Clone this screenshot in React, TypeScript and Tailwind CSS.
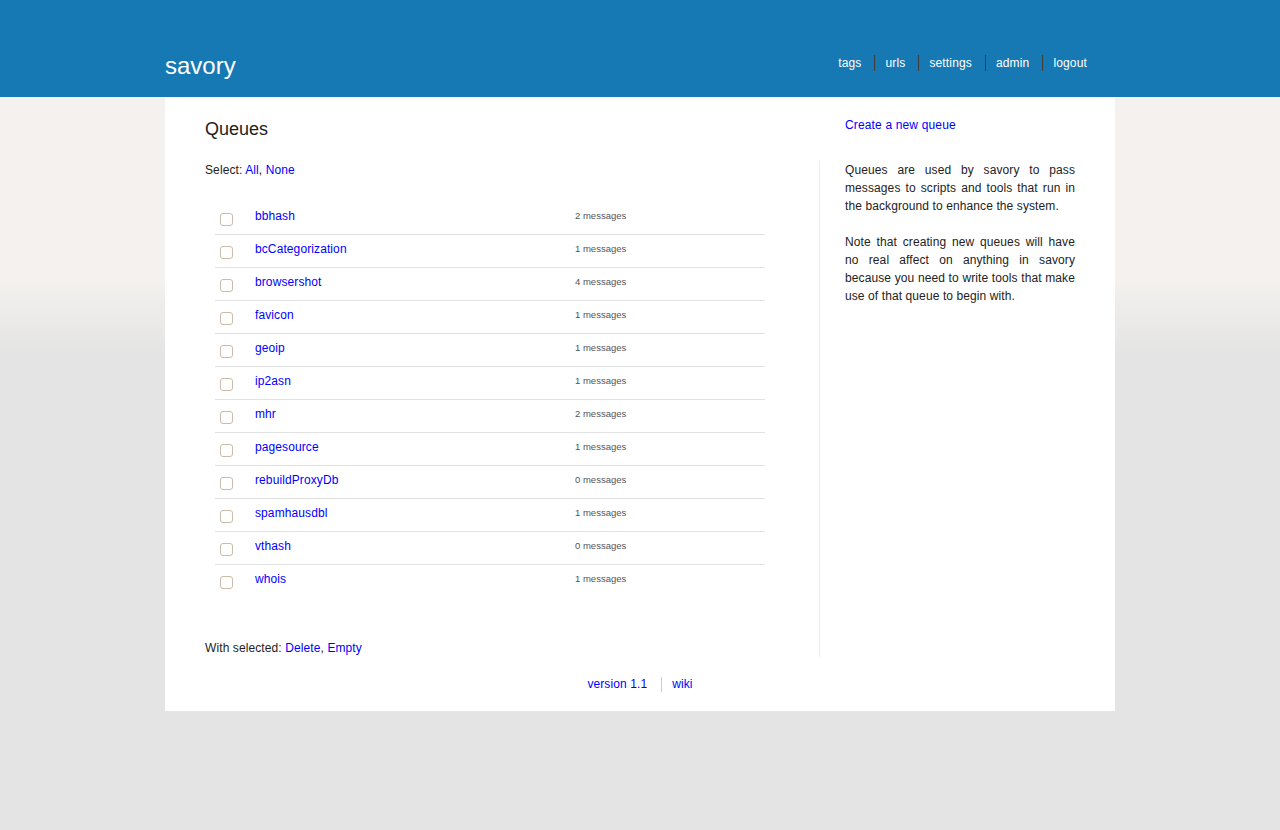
import React from "react";

const queues: [string, number][] = [
  ["bbhash", 2],
  ["bcCategorization", 1],
  ["browsershot", 4],
  ["favicon", 1],
  ["geoip", 1],
  ["ip2asn", 1],
  ["mhr", 2],
  ["pagesource", 1],
  ["rebuildProxyDb", 0],
  ["spamhausdbl", 1],
  ["vthash", 0],
  ["whois", 1],
];

const navItems = ["tags", "urls", "settings", "admin", "logout"];

export default function App() {
  return (
    <div
      className="min-h-screen w-full bg-[linear-gradient(to_bottom,#f4f1ee_0px,#f4f1ee_277px,#e4e4e4_357px,#e4e4e4_100%)] text-[#222] text-[12px] tracking-[0.1px]"
      style={{ fontFamily: '"Liberation Sans", Arial, sans-serif' }}
    >
      <header className="h-[97px] bg-[#1779b3]">
        <div className="mx-auto flex w-[950px] items-start justify-between">
          <div className="pt-[52px] text-[24px] leading-[28px] tracking-normal text-white">savory</div>
          <nav className="mt-[55px] flex items-start pr-[15px] text-[12px] leading-[15px] tracking-[0.15px] text-white">
            {navItems.map((n, i) => (
              <a
                key={n}
                href="#"
                className={
                  i === 0
                    ? "pl-[12px] pr-[13px] pt-[1px]"
                    : "border-l border-[#3c3c3c] pl-[10px] pr-[13px] pt-[1px]"
                }
              >
                {n}
              </a>
            ))}
          </nav>
        </div>
      </header>

      <main className="mx-auto w-[950px] bg-white">
        <div className="flex">
          <section className="w-[654px] shrink-0 pl-[40px] pt-[22px] pb-[2px]">
            <h2 className="text-[18px] leading-[20px] font-normal tracking-normal text-[#222]">Queues</h2>
            <p className="mt-[24px] leading-[14px]">
              Select: <a href="#" className="text-[#0000ff]">All</a>,{" "}
              <a href="#" className="text-[#0000ff]">None</a>
            </p>
            <div className="ml-[10px] mt-[25px] w-[550px]">
              {queues.map(([name, count], i) => (
                <div
                  key={name}
                  className={
                    i === queues.length - 1
                      ? "flex h-[33px]"
                      : "flex h-[33px] border-b border-[#e2e2e2]"
                  }
                >
                  <div className="w-[40px] pl-[5px] pt-[11px]">
                    <span className="block h-[13px] w-[13px] rounded-[3px] border border-[#c9bca8] bg-white" />
                  </div>
                  <div className="w-[320px] pt-[7px] leading-[14px]">
                    <a href="#" className="text-[#0000ff]">
                      {name}
                    </a>
                  </div>
                  <div className="pt-[8px] text-[9.5px] leading-[11px] tracking-normal text-[#555]">
                    {count} messages
                  </div>
                </div>
              ))}
            </div>
            <p className="mt-[43px] leading-[14px]">
              With selected: <a href="#" className="text-[#0000ff]">Delete</a>,{" "}
              <a href="#" className="text-[#0000ff]">Empty</a>
            </p>
          </section>
          <aside className="flex w-[296px] flex-col pt-[21px]">
            <a href="#" className="pl-[26px] leading-[14px] tracking-[0.15px] text-[#0000ff]">
              Create a new queue
            </a>
            <div className="mt-[29px] flex-1 border-l border-[#ececec] pl-[25px] pr-[40px] text-justify leading-[18px]">
              <p>
                Queues are used by savory to pass messages to scripts and tools that run in the
                background to enhance the system.
              </p>
              <p className="mt-[18px]">
                Note that creating new queues will have no real affect on anything in savory
                because you need to write tools that make use of that queue to begin with.
              </p>
            </div>
          </aside>
        </div>
        <footer className="flex h-[54px] items-center justify-center leading-[15px]">
          <a href="#" className="pl-[12px] pr-[14px] text-[#0000ff]">
            version 1.1
          </a>
          <a href="#" className="border-l border-[#cccccc] pl-[10px] pr-[12px] text-[#0000ff]">
            wiki
          </a>
        </footer>
      </main>
    </div>
  );
}
